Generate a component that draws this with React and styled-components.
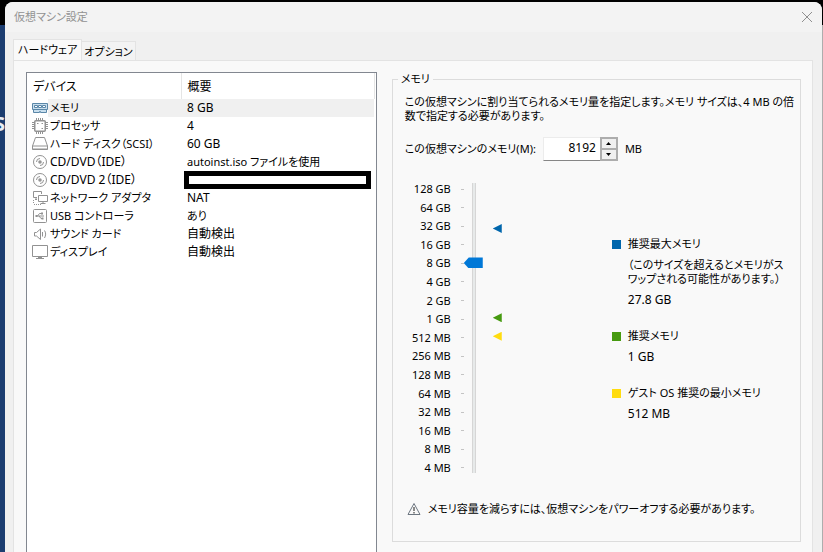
import React, { useState } from 'react';
import styled, { createGlobalStyle } from 'styled-components';

const GlobalStyle = createGlobalStyle`
	* {
		box-sizing: border-box;
	}

	body {
		margin: 0;
		overflow: hidden;
		color: #000;
		font-family: 'Noto Sans', 'Noto Sans CJK JP', sans-serif;
		font-size: 11px;
		line-height: 14px;
		font-feature-settings: 'palt';
	}

	button, input {
		font: inherit;
		color: inherit;
	}
`;

const Desktop = styled.div`
	display: flex;
	min-height: 100vh;
	padding-top: 2px;
	padding-right: 1px;
	background: linear-gradient(#000 25px, transparent 25px),
		linear-gradient(90deg, #1c3d70 50%, #adadad 50%);
	background-size: 100% 25px, 100% 100%;
	background-repeat: no-repeat;
`;

const Behind = styled.div`
	display: flex;
	justify-content: flex-end;
	flex: 0 0 5px;
	padding-top: 110px;
	overflow: hidden;
	color: #e8edf5;
	font-size: 20px;
	font-weight: 700;
	line-height: 24px;
`;

const Dialog = styled.main`
	flex: 1;
	min-width: 0;
	display: flex;
	flex-direction: column;
	border-radius: 8px 8px 0 0;
	background: #f0f0f0;
`;

const TitleBar = styled.header`
	display: flex;
	align-items: center;
	justify-content: space-between;
	height: 30px;
	padding: 0 8px 0 9px;
	border-radius: 8px 8px 0 0;
	background: #f3f3f3;
`;

const Title = styled.h1`
	margin: 0;
	color: #919191;
	font-size: 11px;
	font-weight: 400;
`;

const CloseButton = styled.button`
	display: flex;
	padding: 1px;
	border: 0;
	background: none;
`;

const Tabs = styled.div`
	display: flex;
	align-items: flex-end;
	height: 28px;
	padding: 0 8px;
`;

const Tab = styled.button`
	height: ${(p) => (p.$active ? 22 : 19)}px;
	margin-bottom: ${(p) => (p.$active ? -1 : 0)}px;
	padding: ${(p) => (p.$active ? '0 4px 2px' : '2px 2px 0')};
	border: 1px solid #e3e3e3;
	border-bottom: 0;
	border-left-width: ${(p) => (p.$active ? 1 : 0)}px;
	background: ${(p) => (p.$active ? '#f9f9f9' : '#f3f3f3')};
	white-space: nowrap;
`;

const Panel = styled.div`
	flex: 1;
	display: grid;
	grid-template-columns: 6fr 7fr;
	gap: 15px;
	margin: 0 9px 0 8px;
	padding: 11px 11px 0 12px;
	border: 1px solid #e3e3e3;
	border-bottom: 0;
	background: #f9f9f9;
`;

const DeviceList = styled.div`
	padding-right: 1px;
	border: 1px solid #828790;
	border-bottom: 0;
	background: #fff;
`;

const Table = styled.table`
	width: 100%;
	border-collapse: collapse;
	table-layout: fixed;
	text-align: left;
	white-space: nowrap;
`;

const HeadCell = styled.th`
	width: ${(p) => p.$width || 'auto'};
	height: 26px;
	padding: 2px 6px 0;
	border-right: 1px solid #e5e5e5;
	font-size: 12px;
	font-weight: 400;
`;

const Row = styled.tr`
	height: 18px;
`;

const Cell = styled.td`
	padding: 0 0 0 6px;
	background: ${(p) => (p.$selected ? '#f0f0f0' : 'transparent')};
	font-size: ${(p) => (p.$kana ? 11 : 12)}px;
`;

const NameCell = styled(Cell)`
	padding-left: 5px;
	background: ${(p) => (p.$selected ? 'linear-gradient(90deg, #fff 21px, #f0f0f0 21px)' : 'transparent')};
`;

const Device = styled.div`
	display: flex;
	align-items: center;
	gap: 2px;
	height: 18px;
`;

const Redacted = styled.div`
	height: 18px;
	margin: 0 3px 0 -3px;
	border: 5px solid #000;
	background: #fff;
`;

const Group = styled.fieldset`
	min-width: 0;
	margin: 0 0 10px;
	padding: 9px 4px 21px 12px;
	border: 1px solid #dcdcdc;
`;

const Legend = styled.legend`
	margin-left: -7px;
	padding: 0 3px;
`;

const Text = styled.p`
	margin: 0;
`;

const SizeRow = styled.div`
	display: flex;
	align-items: center;
	gap: 7px;
	margin-top: 14px;
`;

const SpinBox = styled.div`
	display: flex;
	width: 75px;
	height: 24px;
	border: 1px solid #ececec;
	border-bottom-color: #868686;
	background: #fff;
	font-size: 12px;
`;

const SizeInput = styled.input`
	flex: 1;
	min-width: 0;
	padding: 0 4px 2px 0;
	border: 0;
	outline: 0;
	background: none;
	text-align: right;
`;

const Spinner = styled.div`
	display: flex;
	flex-direction: column;
	width: 18px;
	height: 24px;
	margin: -1px -1px 0 0;
	border: 1px solid #adadad;
`;

const SpinButton = styled.button`
	flex: 1;
	display: flex;
	align-items: center;
	justify-content: center;
	padding: 0;
	border: 1px solid #adadad;
	background: #f0f0f0;
`;

const Chart = styled.div`
	display: flex;
	align-items: flex-start;
	margin-top: 21px;
`;

const Scale = styled.ol`
	display: flex;
	flex-direction: column;
	justify-content: space-between;
	width: 59px;
	height: 293px;
	margin: 0;
	padding: 0;
	list-style: none;
`;

const Step = styled.li`
	display: flex;
	align-items: center;
	justify-content: flex-end;
	gap: 10px;

	&::after {
		content: '';
		width: 3px;
		height: 1px;
		background: #c4c4c4;
	}
`;

const Slider = styled.input`
	appearance: none;
	writing-mode: vertical-lr;
	direction: rtl;
	width: 19px;
	height: 290px;
	margin: 1px 0 0;
	background: linear-gradient(90deg, transparent 8px, #d6d6d6 8px 9px, #e7eaea 9px 11px, #d6d6d6 11px 12px, transparent 12px);

	&::-webkit-slider-thumb {
		appearance: none;
		width: 19px;
		height: 11px;
		background: #0078d7;
		clip-path: polygon(0 50%, 5px 0, 100% 0, 100% 100%, 5px 100%);
	}
`;

const Marks = styled.div`
	position: relative;
	width: 9px;
	height: 279px;
	margin: 6px 0 0 10px;
`;

const Mark = styled.span`
	position: absolute;
	left: 0;
	width: 9px;
	height: 9px;
	margin-bottom: -4px;
	background: ${(p) => p.$color};
	clip-path: polygon(0 50%, 100% 0, 100% 100%);
`;

const Hints = styled.dl`
	flex: 1;
	display: flex;
	flex-direction: column;
	gap: 22px;
	margin: 55px 4px 0 110px;
`;

const Hint = styled.div`
	display: flex;
	flex-direction: column;
	gap: 7px;
	padding-left: 16px;
`;

const HintName = styled.dt`
	display: flex;
	align-items: center;
	gap: 7px;
	margin-left: -16px;

	&::before {
		content: '';
		width: 9px;
		height: 9px;
		background: ${(p) => p.$color};
	}
`;

const HintNote = styled.dd`
	margin: 0;
`;

const HintValue = styled.dd`
	margin: 0;
	font-size: 12px;
`;

const Warning = styled.div`
	display: flex;
	align-items: center;
	gap: 7px;
	margin: 27px 0 0 2px;
`;

const Icon = ({ name }) => (
	<svg width="16" height="16" viewBox="0 0 16 16" fill="none" stroke="#929292" aria-hidden="true">
		{icons[name]}
	</svg>
);

const icons = {
	memory: (
		<>
			<path d="M.5 3.5h15v6h-1v3h-6v-1h-1v1h-6v-3h-1z" fill="#c9dfee" stroke="#5b87a8" />
			<path d="M2.5 5.5h3v2h-3zM6.5 5.5h3v2h-3zM10.5 5.5h3v2h-3z" fill="#fff" stroke="#5b87a8" />
			<path d="M1 9.5h14" stroke="#5b87a8" />
		</>
	),
	cpu: (
		<>
			<rect x="2.75" y="2.75" width="10.5" height="10.5" rx="1" strokeWidth="1.5" />
			<path d="M4.5 0v2M6.5 0v2M8.5 0v2M10.5 0v2M4.5 14v2M6.5 14v2M8.5 14v2M10.5 14v2M0 4.5h2M0 6.5h2M0 8.5h2M0 10.5h2M14 4.5h2M14 6.5h2M14 8.5h2M14 10.5h2" />
			<path d="M5 5.5h1.5M9.5 10.5H11M9.5 5.5H11" />
		</>
	),
	disk: (
		<>
			<path d="M3.5 1.5h9l3 8.5v3.500H.5V10z" />
			<path d="M.5 10h15M.5 13h15" />
		</>
	),
	cd: (
		<>
			<circle cx="8" cy="8" r="6.5" />
			<circle cx="8" cy="8" r="1" strokeWidth="1.5" />
			<path d="M4.5 8A3.5 3.5 0 0 1 8 4.5M11.5 8A3.5 3.5 0 0 1 8 11.5" />
		</>
	),
	network: (
		<>
			<path d="M9.5 4V1.5h-8v6H5M3 9.5h2M4 7.5v2" />
			<path d="M6.5 5.5h9v6h-9zM11 11.5v2M8.5 13.5h5" fill="#fff" />
			<path d="M1.5 10v4M2 14.5h8" strokeDasharray="1 1" />
		</>
	),
	usb: (
		<>
			<rect x="1.5" y="1.5" width="13" height="13" rx="1" />
			<path d="M4 8h8M5.5 8l2-2.500h2M7 8l2 2.500h2" />
			<path d="M3.5 7h2v2h-2zM9 4.5h2v2H9zM9.5 9.5h2v2h-2z" fill="#929292" stroke="none" />
		</>
	),
	sound: (
		<>
			<path d="M2.5 6.5h2l4-3.500v10.500l-4-3.500h-2z" />
			<path d="M10.5 6v4.500M12.5 4.500c1.500 2 1.500 5 0 7.500" />
		</>
	),
	display: (
		<>
			<path d="M.5 1.5h15v11H.5z" />
			<path d="M6 13.5h4M4 14.5h8" />
		</>
	),
};

const devices = [
	{ icon: 'memory', name: 'メモリ', summary: '8 GB' },
	{ icon: 'cpu', name: 'プロセッサ', summary: '4' },
	{ icon: 'disk', name: 'ハード ディスク（SCSI）', summary: '60 GB' },
	{ icon: 'cd', name: 'CD/DVD（IDE）', summary: 'autoinst.iso ファイルを使用' },
	{ icon: 'cd', name: 'CD/DVD 2（IDE）', summary: '' },
	{ icon: 'network', name: 'ネットワーク アダプタ', summary: 'NAT' },
	{ icon: 'usb', name: 'USB コントローラ', summary: 'あり' },
	{ icon: 'sound', name: 'サウンド カード', summary: '自動検出' },
	{ icon: 'display', name: 'ディスプレイ', summary: '自動検出' },
];

const steps = [
	'128 GB', '64 GB', '32 GB', '16 GB', '8 GB', '4 GB', '2 GB', '1 GB',
	'512 MB', '256 MB', '128 MB', '64 MB', '32 MB', '16 MB', '8 MB', '4 MB',
];

const hints = [
	{
		name: '推奨最大メモリ',
		note: '（このサイズを超えるとメモリがスワップされる可能性があります。）',
		value: '27.8 GB',
		mb: 28467,
		color: '#0066ac',
	},
	{ name: '推奨メモリ', value: '1 GB', mb: 1024, color: '#469a10' },
	{ name: 'ゲスト OS 推奨の最小メモリ', value: '512 MB', mb: 512, color: '#ffdc0f' },
];

const hasKana = (text) => /[ぁ-ヺ]/.test(text);

// the scale doubles at every step, from 4 MB up to 128 GB
const toStep = (mb) => Math.log2(mb / 4);

export default function App() {
	const [size, setSize] = useState(8192);

	return (
		<>
			<GlobalStyle />
			<Desktop>
				<Behind>S</Behind>
				<Dialog>
					<TitleBar>
						<Title>仮想マシン設定</Title>
						<CloseButton aria-label="閉じる">
							<svg width="12" height="12" viewBox="0 0 12 12" stroke="#8f8f8f">
								<path d="M1 1l10 10M11 1L1 11" />
							</svg>
						</CloseButton>
					</TitleBar>
					<Tabs role="tablist">
						<Tab role="tab" aria-selected="true" $active>ハードウェア</Tab>
						<Tab role="tab" aria-selected="false">オプション</Tab>
					</Tabs>
					<Panel>
						<DeviceList>
							<Table>
								<thead>
									<tr>
										<HeadCell $width="154px">デバイス</HeadCell>
										<HeadCell>概要</HeadCell>
									</tr>
								</thead>
								<tbody>
									{devices.map((d, i) => (
										<Row key={d.name}>
											<NameCell $selected={i === 0} $kana={hasKana(d.name)}>
												<Device><Icon name={d.icon} />{d.name}</Device>
											</NameCell>
											<Cell $selected={i === 0} $kana={hasKana(d.summary)}>
												{d.summary || <Redacted />}
											</Cell>
										</Row>
									))}
								</tbody>
							</Table>
						</DeviceList>
						<Group>
							<Legend>メモリ</Legend>
							<Text>この仮想マシンに割り当てられるメモリ量を指定します。メモリ サイズは、4 MB の倍数で指定する必要があります。</Text>
							<SizeRow>
								<label htmlFor="size">この仮想マシンのメモリ(M):</label>
								<SpinBox>
									<SizeInput id="size" value={size} onChange={(e) => setSize(Number(e.target.value) || 0)} />
									<Spinner>
										<SpinButton aria-label="増やす" onClick={() => setSize(size + 4)}>
											<svg width="5" height="3" viewBox="0 0 5 3"><path d="M0 3L2.5 0L5 3z" /></svg>
										</SpinButton>
										<SpinButton aria-label="減らす" onClick={() => setSize(Math.max(4, size - 4))}>
											<svg width="5" height="3" viewBox="0 0 5 3"><path d="M0 0L2.5 3L5 0z" /></svg>
										</SpinButton>
									</Spinner>
								</SpinBox>
								<span>MB</span>
							</SizeRow>
							<Chart>
								<Scale>
									{steps.map((s) => <Step key={s}>{s}</Step>)}
								</Scale>
								<Slider
									type="range"
									aria-label="メモリ"
									min="0"
									max="15"
									step="any"
									value={toStep(Math.max(4, size))}
									onChange={(e) => setSize(Math.round(2 ** e.target.value) * 4)}
								/>
								<Marks>
									{hints.map((h) => (
										<Mark key={h.name} $color={h.color} style={{ bottom: `${toStep(h.mb) / 15 * 100}%` }} />
									))}
								</Marks>
								<Hints>
									{hints.map((h) => (
										<Hint key={h.name}>
											<HintName $color={h.color}>{h.name}</HintName>
											{h.note && <HintNote>{h.note}</HintNote>}
											<HintValue>{h.value}</HintValue>
										</Hint>
									))}
								</Hints>
							</Chart>
							<Warning>
								<svg width="14" height="14" viewBox="0 0 14 14" fill="none" stroke="#6c7680">
									<path d="M7 1.5L13 12.5H1z" />
									<path d="M7 5v4M7 10v1.500" stroke="#8a8a8a" strokeWidth="2" />
								</svg>
								<Text>メモリ容量を減らすには、仮想マシンをパワーオフする必要があります。</Text>
							</Warning>
						</Group>
					</Panel>
				</Dialog>
			</Desktop>
		</>
	);
}
